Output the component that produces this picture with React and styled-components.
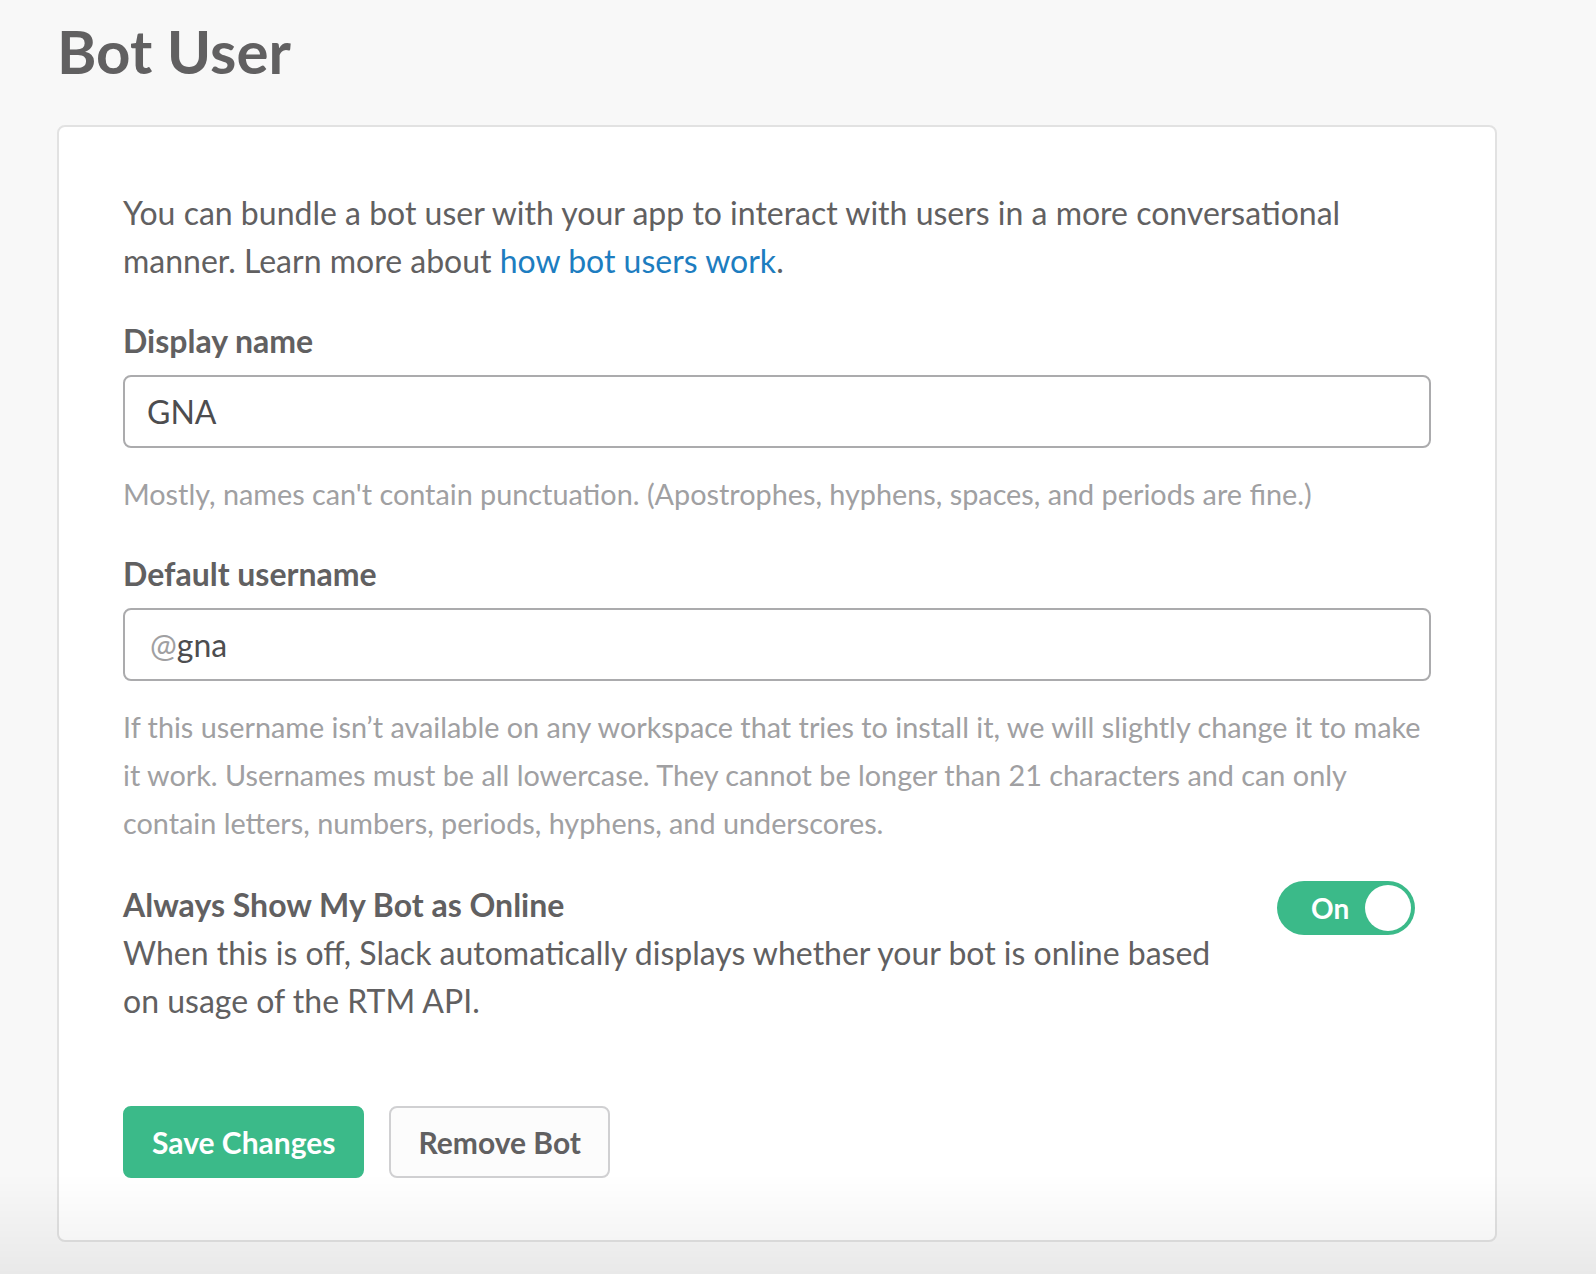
import React from "react";
import styled, { createGlobalStyle } from "styled-components";

const GlobalStyle = createGlobalStyle`
  html, body {
    margin: 0;
    padding: 0;
    background: #f8f8f8;
    font-family: Lato, "Open Sans", sans-serif;
    color: #616061;
  }
  * {
    box-sizing: border-box;
  }
`;

const StyledPage = styled.div`
  padding: 15px 0 0 57px;
  min-height: 1274px;

  & > .page_title {
    margin: 0 0 38px 0;
    font-size: 60px;
    line-height: 72px;
    font-weight: 700;
    color: #616061;
  }
`;

const Card = styled.div`
  width: 1440px;
  background: #fff;
  border: 2px solid #e2e2e2;
  border-radius: 8px;
  padding: 62px 64px 62px 64px;
`;

const Text = styled.p`
  margin: ${(p) => p.margin || "0"};
  font-size: ${(p) => (p.help ? "28.8px" : "32px")};
  line-height: 48px;
  font-weight: ${(p) => (p.bold ? 700 : 400)};
  color: ${(p) => (p.help ? "#a0a0a2" : "#616061")};

  & > a {
    color: #1d7dc0;
    text-decoration: none;
  }
`;

const Label = styled.label`
  display: block;
  margin: 32px 0 10px 0;
  font-size: 32px;
  line-height: 48px;
  font-weight: 700;
  color: #616061;
`;

const Field = styled.div`
  display: flex;
  align-items: center;
  height: 73px;
  padding: 0 22px;
  border: 2px solid #ababad;
  border-radius: 8px;
  background: #fff;
  font-size: 32px;

  & > .field_prefix {
    margin-left: 3px;
    color: #a0a0a2;
  }

  & > input {
    flex: 1;
    border: none;
    outline: none;
    padding: 0;
    background: transparent;
    font-family: Lato, "Open Sans", sans-serif;
    font-size: 32px;
    color: #4d4d4f;
  }
`;

const ToggleRow = styled.div`
  display: flex;
  justify-content: space-between;
  align-items: flex-start;
  margin-top: 34px;

  & > .toggle_text {
    max-width: 1100px;
  }
`;

const Toggle = styled.div`
  display: flex;
  align-items: center;
  justify-content: space-between;
  width: 138px;
  height: 54px;
  margin: 0 16px 0 0;
  padding: 0 4px 0 34px;
  border-radius: 27px;
  background: ${(p) => (p.on ? "#3bba89" : "#c8c8ca")};
  color: #fff;
  font-size: 28px;
  font-weight: 700;

  & > .toggle_knob {
    width: 46px;
    height: 46px;
    border-radius: 50%;
    background: #fff;
  }
`;

const Actions = styled.div`
  display: flex;
  gap: 25px;
  margin-top: 81px;
`;

const Button = styled.button`
  height: 72px;
  padding: 0 27px;
  border-radius: 8px;
  border: 2px solid ${(p) => (p.primary ? "#3bba89" : "#d0d0d2")};
  background: ${(p) => (p.primary ? "#3bba89" : "#fcfcfc")};
  color: ${(p) => (p.primary ? "#fff" : "#616061")};
  font-family: Lato, "Open Sans", sans-serif;
  font-size: 30px;
  font-weight: 700;
  cursor: pointer;
`;

const BottomFade = styled.div`
  position: fixed;
  left: 0;
  right: 0;
  bottom: 0;
  height: 100px;
  pointer-events: none;
  background: linear-gradient(rgba(0, 0, 0, 0), rgba(0, 0, 0, 0.06));
`;

function App() {
  return (
    <StyledPage>
      <GlobalStyle />
      <h1 className="page_title">Bot User</h1>
      <Card>
        <Text>
          You can bundle a bot user with your app to interact with users in a
          more conversational manner. Learn more about{" "}
          <a href="#bot-users">how bot users work</a>.
        </Text>

        <Label>Display name</Label>
        <Field>
          <input defaultValue="GNA" />
        </Field>
        <Text help margin="22px 0 0 0">
          Mostly, names can't contain punctuation. (Apostrophes, hyphens,
          spaces, and periods are fine.)
        </Text>

        <Label>Default username</Label>
        <Field>
          <span className="field_prefix">@</span>
          <input defaultValue="gna" />
        </Field>
        <Text help margin="22px 0 0 0">
          If this username isn’t available on any workspace that tries to
          install it, we will slightly change it to make it work. Usernames
          must be all lowercase. They cannot be longer than 21 characters and
          can only contain letters, numbers, periods, hyphens, and underscores.
        </Text>

        <ToggleRow>
          <div className="toggle_text">
            <Text bold>Always Show My Bot as Online</Text>
            <Text>
              When this is off, Slack automatically displays whether your bot
              is online based on usage of the RTM API.
            </Text>
          </div>
          <Toggle on>
            <span>On</span>
            <span className="toggle_knob" />
          </Toggle>
        </ToggleRow>

        <Actions>
          <Button primary>Save Changes</Button>
          <Button>Remove Bot</Button>
        </Actions>
      </Card>
      <BottomFade />
    </StyledPage>
  );
}

export default App;
